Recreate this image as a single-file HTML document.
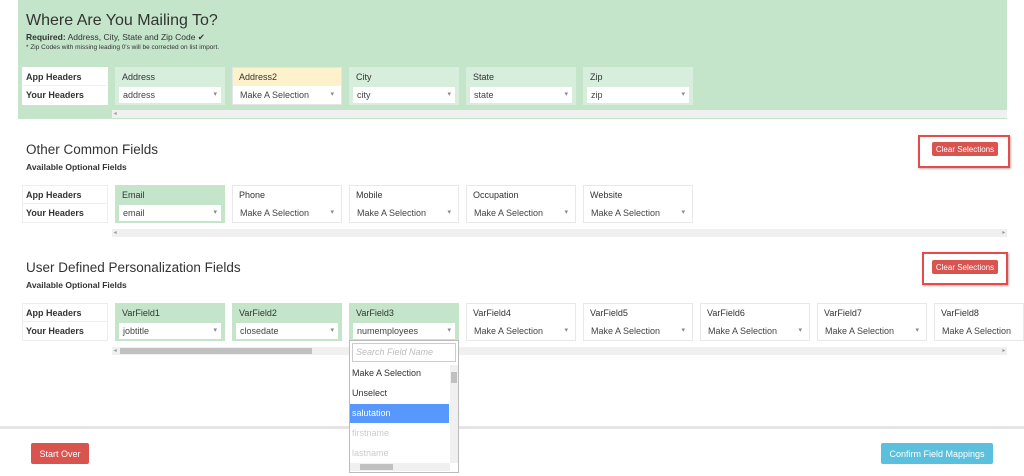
<!DOCTYPE html>
<html><head><meta charset="utf-8"><style>
*{box-sizing:border-box;margin:0;padding:0}
body{width:1024px;height:476px;overflow:hidden;background:#fff;font-family:"Liberation Sans",sans-serif;color:#333;position:relative}
.a{position:absolute}
.green{background:#c4e5ca}
h2{position:absolute;font-size:13.5px;font-weight:normal;color:#333}
.b{font-weight:bold}
.lab{position:absolute;width:86px;height:38px;background:#fff;border:1px solid #eee;font-size:9px;font-weight:bold}
.lab div{height:18px;line-height:18px;padding-left:3px;border-bottom:1px solid #eee}
.lab div+div{border:none}
.col{position:absolute;width:110px;height:38px;border:1px solid #e8e8e8;background:#fff;font-size:9px}
.col .h{height:18px;line-height:18px;padding-left:6px}
.col .s{position:absolute;left:3px;right:3px;top:19px;height:16px;line-height:16px;padding-left:4px;background:#fff;color:#444}
.col .s:after{content:"▾";position:absolute;right:4px;top:0;font-size:7px;color:#888}
.col.g{background:#c4e5ca;border-color:#c4e5ca}
.col.lg{background:#d6eedb;border-color:#d6eedb}
.col.y .h{background:#fdf2cc}
.col.y{background:#fff;border-color:#e5e5e5}
.sb{position:absolute;height:8px;background:#f0f0f0;font-size:6px;color:#999;line-height:8px}
.btn{position:absolute;background:#d9534f;color:#fff;border-radius:2px;display:flex;align-items:center;justify-content:center}
.outline{position:absolute;border:2px solid #e84a4a;box-shadow:1px 1px 2px rgba(0,0,0,.3)}
</style></head><body>
<div class="a green" style="left:18px;top:0;width:989px;height:119px"></div>
<h2 style="left:26px;top:12px;font-size:16px">Where Are You Mailing To?</h2>
<div class="a" style="left:26px;top:32px;font-size:8.5px"><span class="b">Required:</span> Address, City, State and Zip Code ✔</div>
<div class="a" style="left:26px;top:44px;font-size:6.5px">* Zip Codes with missing leading 0's will be corrected on list import.</div>
<div class="lab" style="left:22px;top:67px;border-color:#fff"><div>App Headers</div><div>Your Headers</div></div>
<div class="col lg" style="left:115px;top:67px"><div class="h">Address</div><div class="s">address</div></div>
<div class="col y" style="left:232px;top:67px"><div class="h">Address2</div><div class="s">Make A Selection</div></div>
<div class="col lg" style="left:349px;top:67px"><div class="h">City</div><div class="s">city</div></div>
<div class="col lg" style="left:466px;top:67px"><div class="h">State</div><div class="s">state</div></div>
<div class="col lg" style="left:583px;top:67px"><div class="h">Zip</div><div class="s">zip</div></div>
<div class="sb" style="left:112px;top:110px;width:895px">&nbsp;◂</div>

<h2 style="left:26px;top:142px">Other Common Fields</h2>
<div class="a b" style="left:26px;top:162px;font-size:8.5px">Available Optional Fields</div>
<div class="outline" style="left:918px;top:135px;width:92px;height:33px"></div>
<div class="btn" style="left:932px;top:142px;width:66px;height:14px;font-size:8px">Clear Selections</div>
<div class="lab" style="left:22px;top:185px"><div>App Headers</div><div>Your Headers</div></div>
<div class="col g" style="left:115px;top:185px"><div class="h">Email</div><div class="s">email</div></div>
<div class="col" style="left:232px;top:185px"><div class="h">Phone</div><div class="s">Make A Selection</div></div>
<div class="col" style="left:349px;top:185px"><div class="h">Mobile</div><div class="s">Make A Selection</div></div>
<div class="col" style="left:466px;top:185px"><div class="h">Occupation</div><div class="s">Make A Selection</div></div>
<div class="col" style="left:583px;top:185px"><div class="h">Website</div><div class="s">Make A Selection</div></div>
<div class="sb" style="left:112px;top:229px;width:895px">&nbsp;◂<span style="float:right">▸&nbsp;</span></div>

<h2 style="left:26px;top:260px">User Defined Personalization Fields</h2>
<div class="a b" style="left:26px;top:280px;font-size:8.5px">Available Optional Fields</div>
<div class="outline" style="left:922px;top:252px;width:86px;height:33px"></div>
<div class="btn" style="left:932px;top:260px;width:66px;height:14px;font-size:8px">Clear Selections</div>
<div class="lab" style="left:22px;top:303px"><div>App Headers</div><div>Your Headers</div></div>
<div class="col g" style="left:115px;top:303px"><div class="h">VarField1</div><div class="s">jobtitle</div></div>
<div class="col g" style="left:232px;top:303px"><div class="h">VarField2</div><div class="s">closedate</div></div>
<div class="col g" style="left:349px;top:303px"><div class="h">VarField3</div><div class="s">numemployees</div></div>
<div class="col" style="left:466px;top:303px"><div class="h">VarField4</div><div class="s">Make A Selection</div></div>
<div class="col" style="left:583px;top:303px"><div class="h">VarField5</div><div class="s">Make A Selection</div></div>
<div class="col" style="left:700px;top:303px"><div class="h">VarField6</div><div class="s">Make A Selection</div></div>
<div class="col" style="left:817px;top:303px"><div class="h">VarField7</div><div class="s">Make A Selection</div></div>
<div class="col" style="left:934px;top:303px;width:90px;overflow:hidden"><div class="h">VarField8</div><div class="s" style="right:-20px">Make A Selection</div></div>
<div class="sb" style="left:112px;top:347px;width:895px">&nbsp;◂<span style="float:right">▸&nbsp;</span></div>
<div class="a" style="left:120px;top:348px;width:192px;height:6px;background:#c0c0c0"></div>

<div class="a" style="left:0;top:426px;width:1024px;height:3px;background:#e5e5e5"></div>
<div class="btn" style="left:31px;top:443px;width:58px;height:21px;font-size:9px">Start Over</div>
<div class="btn" style="left:881px;top:443px;width:112px;height:21px;font-size:9px;background:#5bc0de">Confirm Field Mappings</div>

<div class="a" style="left:349px;top:340px;width:110px;height:133px;background:#fff;border:1px solid #bbb;font-size:9px">
<div class="a" style="left:2px;top:2px;width:104px;height:19px;border:1px solid #ccc;color:#bbb;font-style:italic;padding-left:3px;line-height:17px">Search Field Name</div>
<div class="a" style="left:2px;top:26px;line-height:13px">Make A Selection</div>
<div class="a" style="left:2px;top:46px;line-height:13px">Unselect</div>
<div class="a" style="left:0;top:63px;width:99px;height:19px;background:#5897fb;color:#fff;padding-left:2px;line-height:19px">salutation</div>
<div class="a" style="left:2px;top:86px;color:#ccc;line-height:13px">firstname</div>
<div class="a" style="left:2px;top:106px;color:#ccc;line-height:13px">lastname</div>
<div class="a" style="left:100px;top:24px;width:8px;height:98px;background:#f0f0f0"></div>
<div class="a" style="left:101px;top:31px;width:6px;height:11px;background:#c0c0c0"></div>
<div class="a" style="left:0;top:122px;width:100px;height:8px;background:#f0f0f0"></div>
<div class="a" style="left:10px;top:123px;width:33px;height:6px;background:#c0c0c0"></div>
</div>
</body></html>
